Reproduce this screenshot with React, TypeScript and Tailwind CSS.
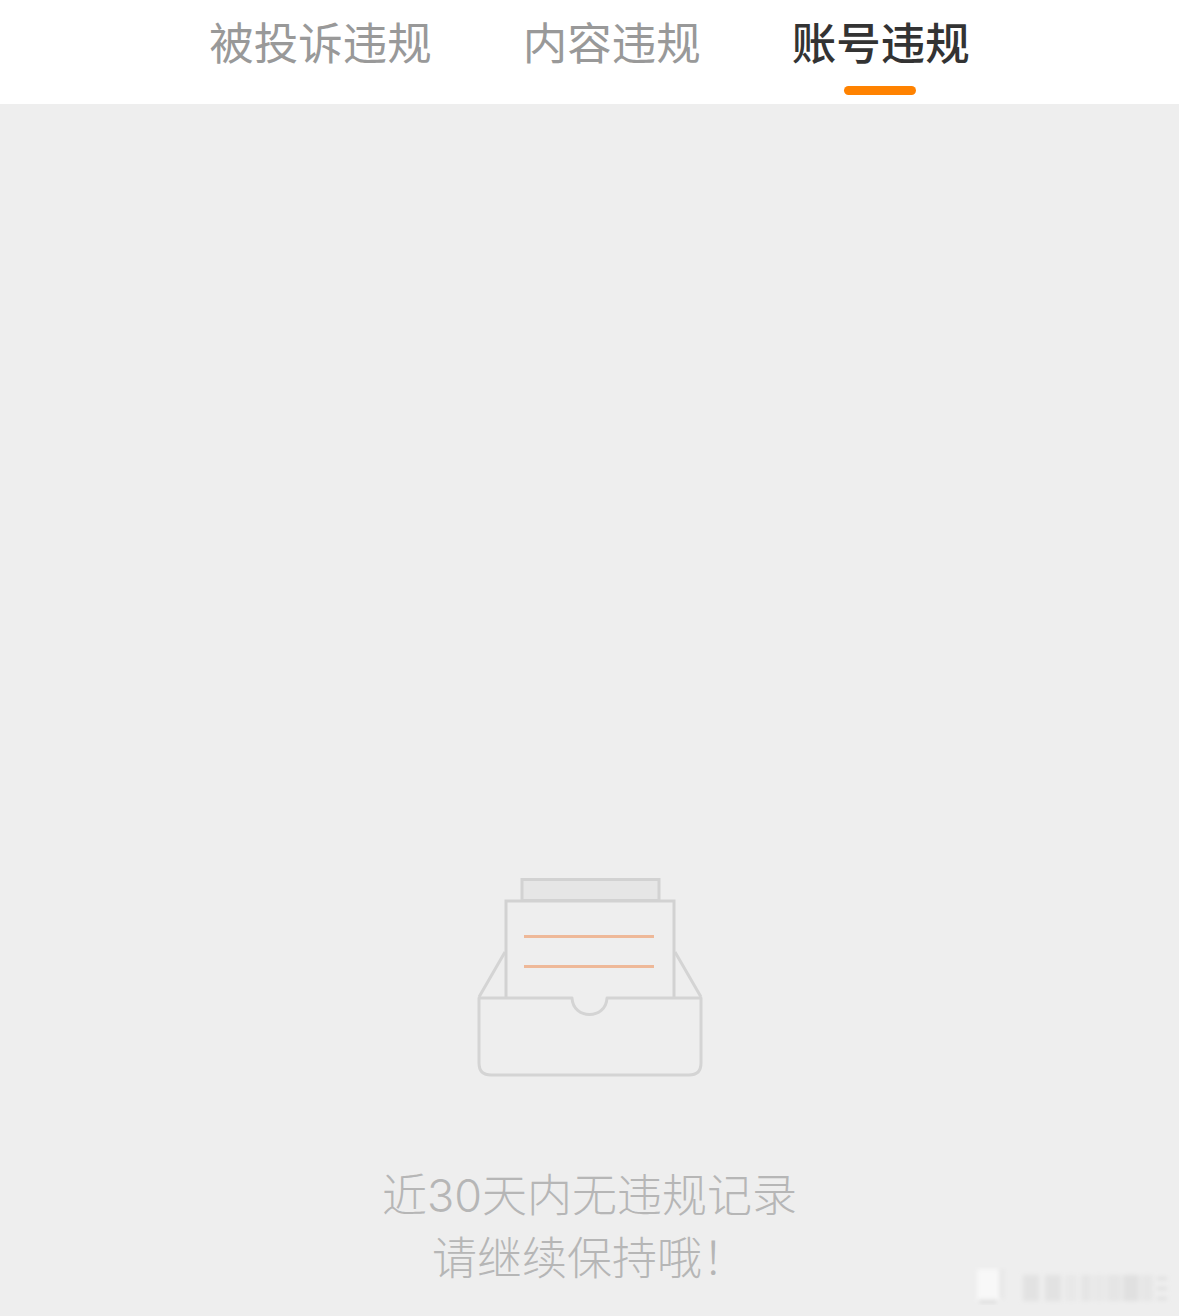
const TABS = [
  { label: '被投诉违规', active: false },
  { label: '内容违规', active: false },
  { label: '账号违规', active: true },
]

function EmptyBox() {
  return (
    <svg width="226" height="200" viewBox="0 0 226 200" fill="none" className="block">
      {/* back sheet */}
      <rect x="45" y="1.5" width="137" height="21" fill="#e6e6e6" stroke="#d2d2d2" strokeWidth="3" />
      {/* tray sides */}
      <path d="M28 74 L2 119 M198 74 L224 119" stroke="#d4d4d4" strokeWidth="3" />
      {/* front sheet */}
      <path d="M29 120 V23 H197 V120" fill="#eeeeee" stroke="#d2d2d2" strokeWidth="3" />
      <path d="M47 58.5 H177 M47 88.5 H177" stroke="#eeb898" strokeWidth="3" />
      {/* tray */}
      <path
        d="M2 120 H95 C96 142 129 142 130 120 H224 V185 Q224 197 212 197 H14 Q2 197 2 185 Z"
        fill="#eeeeee"
        stroke="#d4d4d4"
        strokeWidth="3"
        strokeLinejoin="round"
      />
    </svg>
  )
}

function Watermark() {
  return (
    <svg width="204" height="38" viewBox="0 0 204 38" className="block">
      <defs>
        <filter id="wm-blur">
          <feGaussianBlur stdDeviation="2" />
        </filter>
      </defs>
      <g filter="url(#wm-blur)">
        <rect x="6" y="2" width="22" height="34" rx="3" fill="#f8f8f8" />
        <rect x="8" y="33" width="18" height="3" fill="#d8d8d8" />
        <rect x="29" y="2" width="4" height="30" fill="#e6e6e6" />
        <rect x="52" y="8" width="16" height="26" fill="#e2e2e2" />
        <rect x="74" y="8" width="16" height="26" fill="#e2e2e2" />
        <rect x="94" y="8" width="12" height="26" fill="#e8e8e8" />
        <rect x="110" y="8" width="10" height="26" fill="#e5e5e5" />
        <rect x="122" y="8" width="12" height="26" fill="#e8e8e8" />
        <rect x="136" y="8" width="14" height="26" fill="#e5e5e5" />
        <rect x="152" y="8" width="16" height="26" fill="#e0e0e0" />
        <rect x="170" y="8" width="12" height="26" fill="#e6e6e6" />
        <rect x="186" y="10" width="10" height="3" fill="#dedede" />
        <rect x="186" y="20" width="10" height="3" fill="#dedede" />
        <rect x="186" y="30" width="10" height="3" fill="#dedede" />
      </g>
    </svg>
  )
}

export default function App() {
  return (
    <div className="relative flex h-[1316px] w-[1179px] flex-col overflow-hidden bg-[#eeeeee] font-['Noto_Sans_CJK_SC','Noto_Sans',sans-serif]">
      <header className="flex h-[104px] shrink-0 items-start justify-center gap-[91px] bg-white">
        {TABS.map(tab => (
          <div key={tab.label} className="flex h-[104px] flex-col items-center">
            <span
              className={`mt-[9px] text-[44.5px] leading-[64px] ${
                tab.active ? 'font-medium text-[#333333]' : 'text-[#999999]'
              }`}
            >
              {tab.label}
            </span>
            {tab.active && <span className="mt-[13px] -ml-[2px] h-[9px] w-[72px] rounded-[5px] bg-[#ff8200]" />}
          </div>
        ))}
      </header>

      <main className="flex flex-1 flex-col items-center pt-[774px]">
        <EmptyBox />
        <p className="mt-[83px] text-center text-[45px] leading-[63px] font-light text-[#b6b6b6]">
          近<span className="font-['Inter',sans-serif] leading-none">30</span>天内无违规记录
          <br />
          请继续保持哦！
        </p>
      </main>

      <div className="absolute right-[4px] bottom-[11px]">
        <Watermark />
      </div>
    </div>
  )
}
